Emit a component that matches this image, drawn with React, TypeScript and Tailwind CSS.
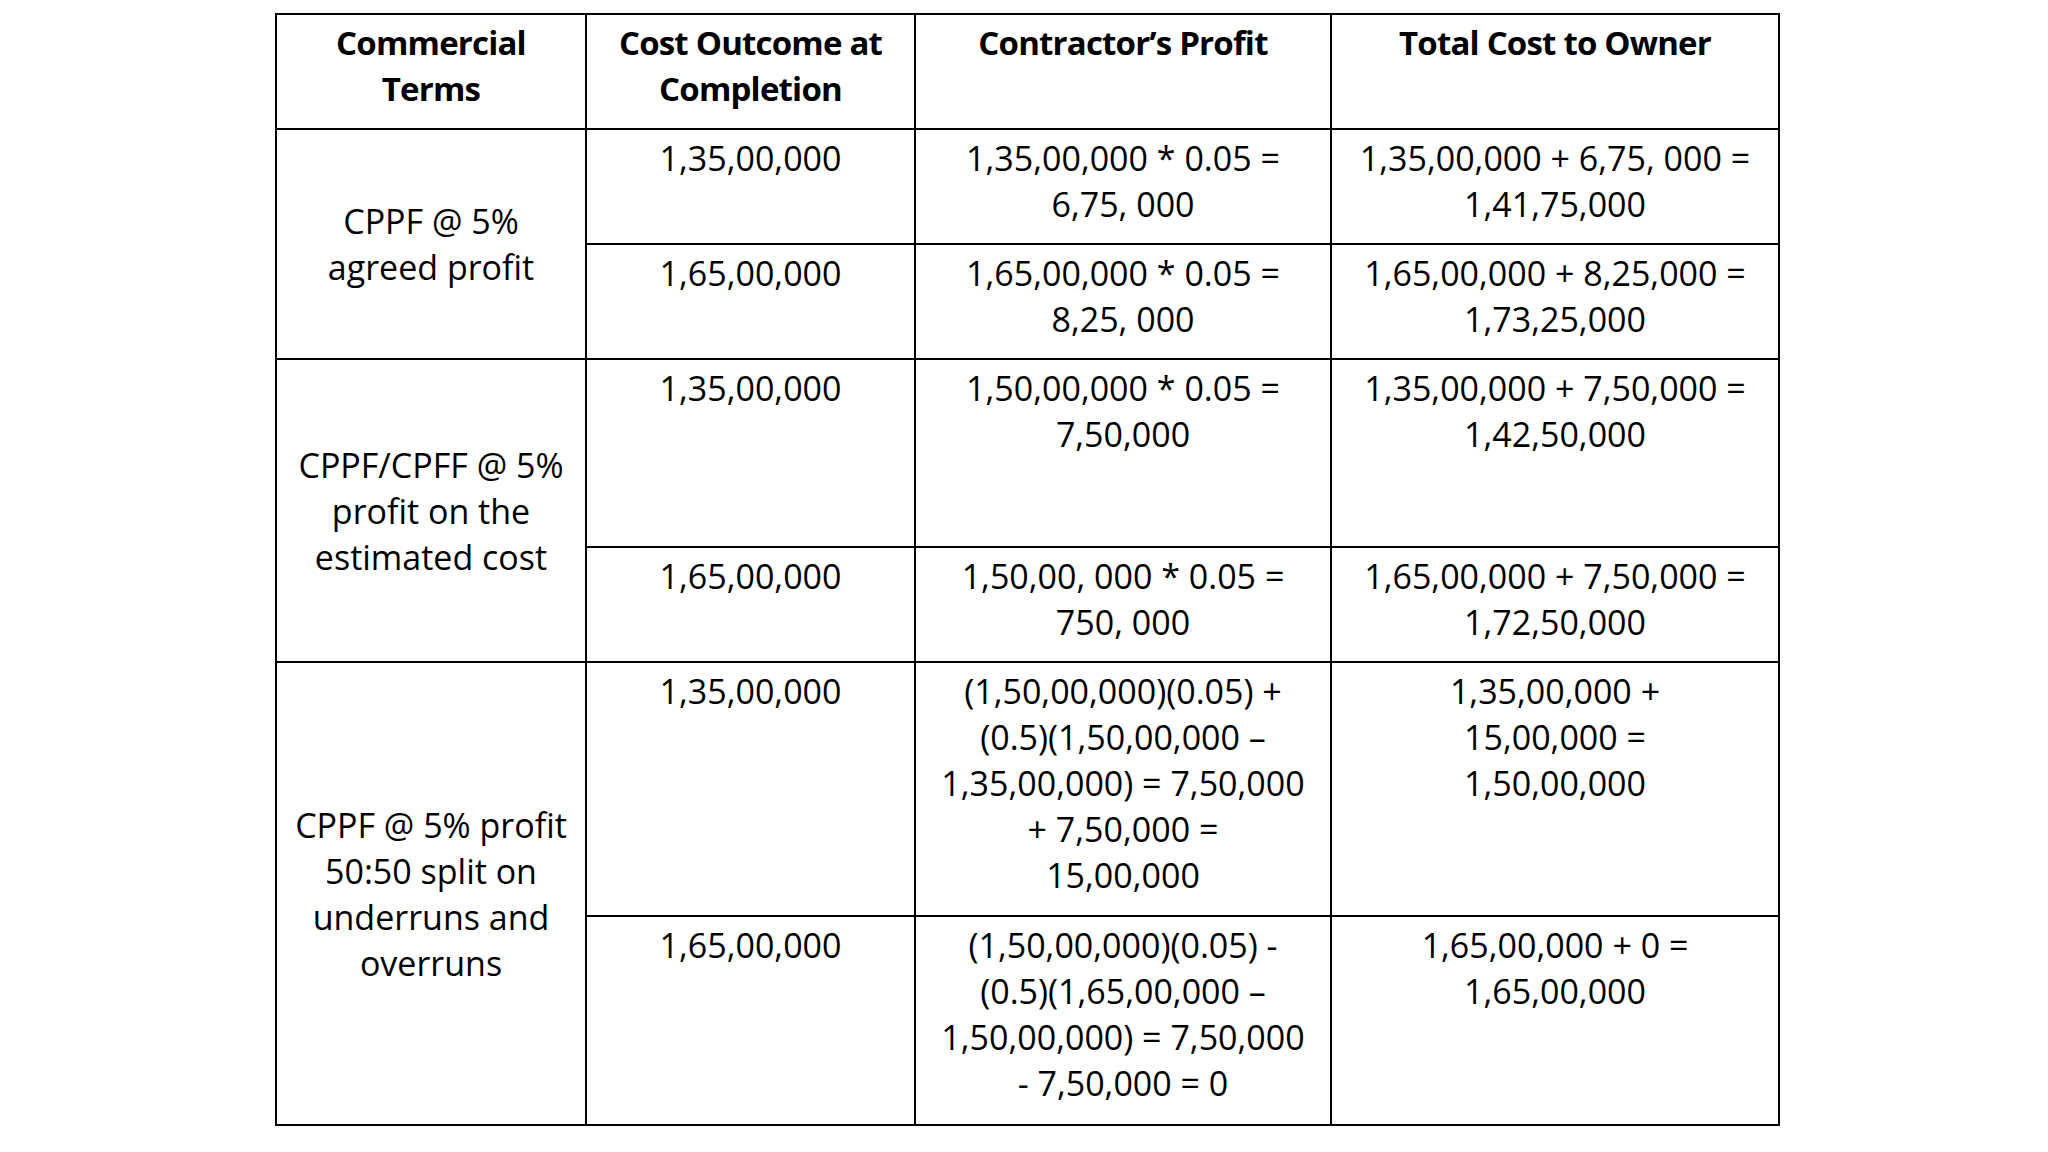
import React from "react";

const Lines = ({ lines }: { lines: string[] }) => (
  <>
    {lines.map((l, i) => (
      <div key={i} className="whitespace-nowrap">
        {l}
      </div>
    ))}
  </>
);

const groups: {
  term: string[];
  rows: { h: string; cost: string; profit: string[]; total: string[] }[];
}[] = [
  {
    term: ["CPPF @ 5%", "agreed profit"],
    rows: [
      {
        h: "h-[115px]",
        cost: "1,35,00,000",
        profit: ["1,35,00,000 * 0.05 =", "6,75, 000"],
        total: ["1,35,00,000 + 6,75, 000 =", "1,41,75,000"],
      },
      {
        h: "h-[115px]",
        cost: "1,65,00,000",
        profit: ["1,65,00,000 * 0.05 =", "8,25, 000"],
        total: ["1,65,00,000 + 8,25,000 =", "1,73,25,000"],
      },
    ],
  },
  {
    term: ["CPPF/CPFF @ 5%", "profit on the", "estimated cost"],
    rows: [
      {
        h: "h-[188px]",
        cost: "1,35,00,000",
        profit: ["1,50,00,000 * 0.05 =", "7,50,000"],
        total: ["1,35,00,000 + 7,50,000 =", "1,42,50,000"],
      },
      {
        h: "h-[115px]",
        cost: "1,65,00,000",
        profit: ["1,50,00, 000 * 0.05 =", "750, 000"],
        total: ["1,65,00,000 + 7,50,000 =", "1,72,50,000"],
      },
    ],
  },
  {
    term: ["CPPF @ 5% profit", "50:50 split on", "underruns and", "overruns"],
    rows: [
      {
        h: "h-[254px]",
        cost: "1,35,00,000",
        profit: [
          "(1,50,00,000)(0.05) +",
          "(0.5)(1,50,00,000 \u2013",
          "1,35,00,000) = 7,50,000",
          "+ 7,50,000 =",
          "15,00,000",
        ],
        total: ["1,35,00,000 +", "15,00,000 =", "1,50,00,000"],
      },
      {
        h: "h-[209px]",
        cost: "1,65,00,000",
        profit: [
          "(1,50,00,000)(0.05) -",
          "(0.5)(1,65,00,000 \u2013",
          "1,50,00,000) = 7,50,000",
          "- 7,50,000 = 0",
        ],
        total: ["1,65,00,000 + 0 =", "1,65,00,000"],
      },
    ],
  },
];

export default function App() {
  const td = "border-2 border-black align-top text-center pt-[5px] px-1";
  const th =
    "border-2 border-black align-top text-center pt-[5px] px-1 font-bold text-[33px] tracking-[-0.8px]";
  return (
    <div
      className="w-[2048px] h-[1152px] bg-white text-black"
      style={{ fontFamily: '"Open Sans", "Liberation Sans", sans-serif' }}
    >
      <div className="pt-[13px] pl-[275px]">
        <table className="table-fixed border-collapse border-2 border-black text-[34px] leading-[46px]">
          <colgroup>
            <col className="w-[310px]" />
            <col className="w-[329px]" />
            <col className="w-[416px]" />
            <col className="w-[448px]" />
          </colgroup>
          <thead>
            <tr className="h-[115px]">
              <th className={th}>
                <Lines lines={["Commercial", "Terms"]} />
              </th>
              <th className={th}>
                <Lines lines={["Cost Outcome at", "Completion"]} />
              </th>
              <th className={th}>
                <Lines lines={["Contractor\u2019s Profit"]} />
              </th>
              <th className={th}>
                <Lines lines={["Total Cost to Owner"]} />
              </th>
            </tr>
          </thead>
          <tbody>
            {groups.map((g, gi) =>
              g.rows.map((r, ri) => (
                <tr key={gi + "-" + ri} className={r.h}>
                  {ri === 0 && (
                    <td
                      rowSpan={g.rows.length}
                      className="border-2 border-black align-middle text-center px-1"
                    >
                      <Lines lines={g.term} />
                    </td>
                  )}
                  <td className={td}>
                    <Lines lines={[r.cost]} />
                  </td>
                  <td className={td}>
                    <Lines lines={r.profit} />
                  </td>
                  <td className={td}>
                    <Lines lines={r.total} />
                  </td>
                </tr>
              ))
            )}
          </tbody>
        </table>
      </div>
    </div>
  );
}
